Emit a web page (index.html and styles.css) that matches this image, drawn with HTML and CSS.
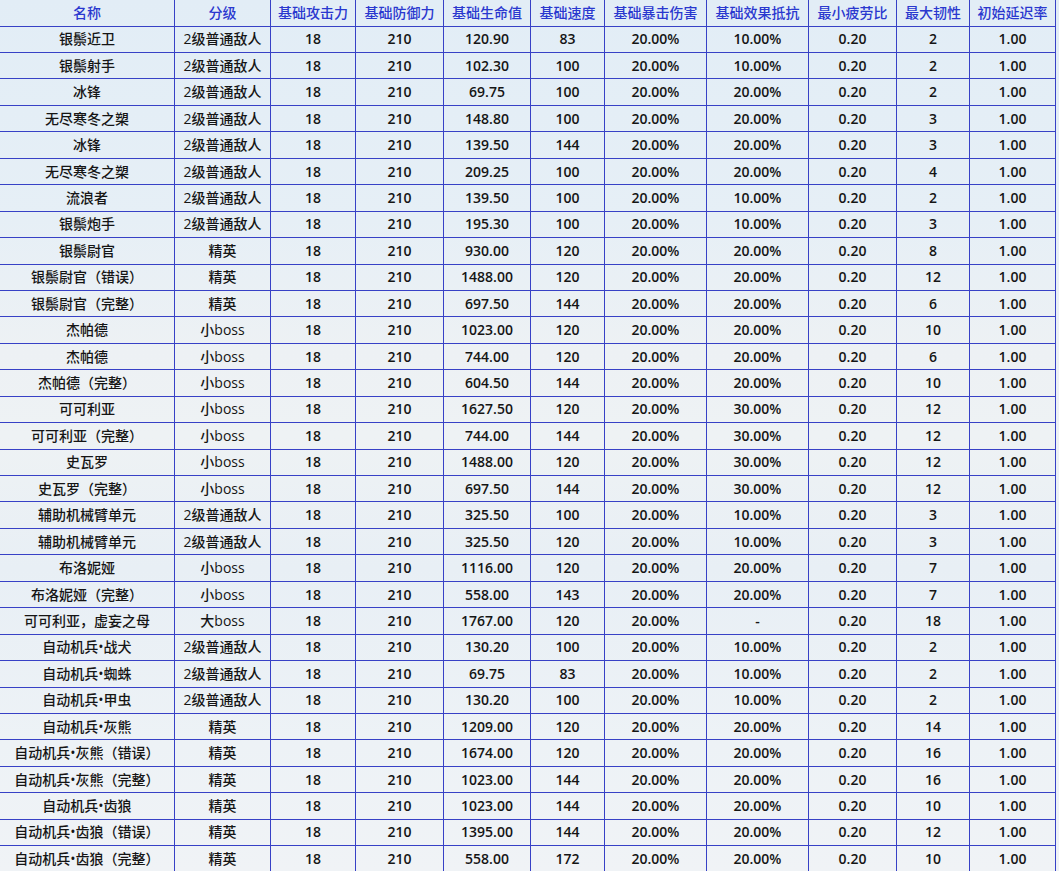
FILE: index.html
```html
<!DOCTYPE html>
<html lang="zh-CN">
<head>
<meta charset="utf-8">
<title>敌人基础数值</title>
<link rel="stylesheet" href="styles.css">
</head>
<body>
<table class="stats">
<colgroup>
<col class="c-name"><col class="c-rank"><col class="c-atk"><col class="c-def"><col class="c-hp"><col class="c-spd"><col class="c-crit"><col class="c-res"><col class="c-fat"><col class="c-tough"><col class="c-delay">
</colgroup>
<thead>
<tr><th>名称</th><th>分级</th><th>基础攻击力</th><th>基础防御力</th><th>基础生命值</th><th>基础速度</th><th>基础暴击伤害</th><th>基础效果抵抗</th><th>最小疲劳比</th><th>最大韧性</th><th>初始延迟率</th></tr>
</thead>
<tbody>
<tr><td>银鬃近卫</td><td>2级普通敌人</td><td>18</td><td>210</td><td>120.90</td><td>83</td><td>20.00%</td><td>10.00%</td><td>0.20</td><td>2</td><td>1.00</td></tr>
<tr><td>银鬃射手</td><td>2级普通敌人</td><td>18</td><td>210</td><td>102.30</td><td>100</td><td>20.00%</td><td>10.00%</td><td>0.20</td><td>2</td><td>1.00</td></tr>
<tr><td>冰锋</td><td>2级普通敌人</td><td>18</td><td>210</td><td>69.75</td><td>100</td><td>20.00%</td><td>20.00%</td><td>0.20</td><td>2</td><td>1.00</td></tr>
<tr><td>无尽寒冬之槊</td><td>2级普通敌人</td><td>18</td><td>210</td><td>148.80</td><td>100</td><td>20.00%</td><td>20.00%</td><td>0.20</td><td>3</td><td>1.00</td></tr>
<tr><td>冰锋</td><td>2级普通敌人</td><td>18</td><td>210</td><td>139.50</td><td>144</td><td>20.00%</td><td>20.00%</td><td>0.20</td><td>3</td><td>1.00</td></tr>
<tr><td>无尽寒冬之槊</td><td>2级普通敌人</td><td>18</td><td>210</td><td>209.25</td><td>100</td><td>20.00%</td><td>20.00%</td><td>0.20</td><td>4</td><td>1.00</td></tr>
<tr><td>流浪者</td><td>2级普通敌人</td><td>18</td><td>210</td><td>139.50</td><td>100</td><td>20.00%</td><td>10.00%</td><td>0.20</td><td>2</td><td>1.00</td></tr>
<tr><td>银鬃炮手</td><td>2级普通敌人</td><td>18</td><td>210</td><td>195.30</td><td>100</td><td>20.00%</td><td>10.00%</td><td>0.20</td><td>3</td><td>1.00</td></tr>
<tr><td>银鬃尉官</td><td>精英</td><td>18</td><td>210</td><td>930.00</td><td>120</td><td>20.00%</td><td>20.00%</td><td>0.20</td><td>8</td><td>1.00</td></tr>
<tr><td>银鬃尉官（错误）</td><td>精英</td><td>18</td><td>210</td><td>1488.00</td><td>120</td><td>20.00%</td><td>20.00%</td><td>0.20</td><td>12</td><td>1.00</td></tr>
<tr><td>银鬃尉官（完整）</td><td>精英</td><td>18</td><td>210</td><td>697.50</td><td>144</td><td>20.00%</td><td>20.00%</td><td>0.20</td><td>6</td><td>1.00</td></tr>
<tr><td>杰帕德</td><td>小boss</td><td>18</td><td>210</td><td>1023.00</td><td>120</td><td>20.00%</td><td>20.00%</td><td>0.20</td><td>10</td><td>1.00</td></tr>
<tr><td>杰帕德</td><td>小boss</td><td>18</td><td>210</td><td>744.00</td><td>120</td><td>20.00%</td><td>20.00%</td><td>0.20</td><td>6</td><td>1.00</td></tr>
<tr><td>杰帕德（完整）</td><td>小boss</td><td>18</td><td>210</td><td>604.50</td><td>144</td><td>20.00%</td><td>20.00%</td><td>0.20</td><td>10</td><td>1.00</td></tr>
<tr><td>可可利亚</td><td>小boss</td><td>18</td><td>210</td><td>1627.50</td><td>120</td><td>20.00%</td><td>30.00%</td><td>0.20</td><td>12</td><td>1.00</td></tr>
<tr><td>可可利亚（完整）</td><td>小boss</td><td>18</td><td>210</td><td>744.00</td><td>144</td><td>20.00%</td><td>30.00%</td><td>0.20</td><td>12</td><td>1.00</td></tr>
<tr><td>史瓦罗</td><td>小boss</td><td>18</td><td>210</td><td>1488.00</td><td>120</td><td>20.00%</td><td>30.00%</td><td>0.20</td><td>12</td><td>1.00</td></tr>
<tr><td>史瓦罗（完整）</td><td>小boss</td><td>18</td><td>210</td><td>697.50</td><td>144</td><td>20.00%</td><td>30.00%</td><td>0.20</td><td>12</td><td>1.00</td></tr>
<tr><td>辅助机械臂单元</td><td>2级普通敌人</td><td>18</td><td>210</td><td>325.50</td><td>100</td><td>20.00%</td><td>10.00%</td><td>0.20</td><td>3</td><td>1.00</td></tr>
<tr><td>辅助机械臂单元</td><td>2级普通敌人</td><td>18</td><td>210</td><td>325.50</td><td>120</td><td>20.00%</td><td>10.00%</td><td>0.20</td><td>3</td><td>1.00</td></tr>
<tr><td>布洛妮娅</td><td>小boss</td><td>18</td><td>210</td><td>1116.00</td><td>120</td><td>20.00%</td><td>20.00%</td><td>0.20</td><td>7</td><td>1.00</td></tr>
<tr><td>布洛妮娅（完整）</td><td>小boss</td><td>18</td><td>210</td><td>558.00</td><td>143</td><td>20.00%</td><td>20.00%</td><td>0.20</td><td>7</td><td>1.00</td></tr>
<tr><td>可可利亚，虚妄之母</td><td>大boss</td><td>18</td><td>210</td><td>1767.00</td><td>120</td><td>20.00%</td><td>-</td><td>0.20</td><td>18</td><td>1.00</td></tr>
<tr><td>自动机兵•战犬</td><td>2级普通敌人</td><td>18</td><td>210</td><td>130.20</td><td>100</td><td>20.00%</td><td>10.00%</td><td>0.20</td><td>2</td><td>1.00</td></tr>
<tr><td>自动机兵•蜘蛛</td><td>2级普通敌人</td><td>18</td><td>210</td><td>69.75</td><td>83</td><td>20.00%</td><td>10.00%</td><td>0.20</td><td>2</td><td>1.00</td></tr>
<tr><td>自动机兵•甲虫</td><td>2级普通敌人</td><td>18</td><td>210</td><td>130.20</td><td>100</td><td>20.00%</td><td>10.00%</td><td>0.20</td><td>2</td><td>1.00</td></tr>
<tr><td>自动机兵•灰熊</td><td>精英</td><td>18</td><td>210</td><td>1209.00</td><td>120</td><td>20.00%</td><td>20.00%</td><td>0.20</td><td>14</td><td>1.00</td></tr>
<tr><td>自动机兵•灰熊（错误）</td><td>精英</td><td>18</td><td>210</td><td>1674.00</td><td>120</td><td>20.00%</td><td>20.00%</td><td>0.20</td><td>16</td><td>1.00</td></tr>
<tr><td>自动机兵•灰熊（完整）</td><td>精英</td><td>18</td><td>210</td><td>1023.00</td><td>144</td><td>20.00%</td><td>20.00%</td><td>0.20</td><td>16</td><td>1.00</td></tr>
<tr><td>自动机兵•齿狼</td><td>精英</td><td>18</td><td>210</td><td>1023.00</td><td>144</td><td>20.00%</td><td>20.00%</td><td>0.20</td><td>10</td><td>1.00</td></tr>
<tr><td>自动机兵•齿狼（错误）</td><td>精英</td><td>18</td><td>210</td><td>1395.00</td><td>144</td><td>20.00%</td><td>20.00%</td><td>0.20</td><td>12</td><td>1.00</td></tr>
<tr><td>自动机兵•齿狼（完整）</td><td>精英</td><td>18</td><td>210</td><td>558.00</td><td>172</td><td>20.00%</td><td>20.00%</td><td>0.20</td><td>10</td><td>1.00</td></tr>
</tbody>
</table>
</body>
</html>
```
FILE: styles.css
```css
html, body {
  margin: 0;
  padding: 0;
}
body {
  width: 1059px;
  min-height: 871px;
  background: linear-gradient(180deg, #e2edf6 0%, #e6eff6 25%, #edf1f4 40%, #eef2f4 50%, #e8eff5 65%, #edf2f6 85%, #f0f3f6 100%);
  font-family: "Open Sans", "Noto Sans CJK SC", sans-serif;
  overflow: hidden;
}
.stats {
  width: 1056px;
  table-layout: fixed;
  border-collapse: separate;
  border-spacing: 0;
}
.c-name { width: 175px; }
.c-rank { width: 96px; }
.c-atk { width: 85px; }
.c-def { width: 88px; }
.c-hp { width: 87px; }
.c-spd { width: 74px; }
.c-crit { width: 102px; }
.c-res { width: 102px; }
.c-fat { width: 88px; }
.c-tough { width: 73px; }
.c-delay { width: 86px; }
.stats th,
.stats td {
  box-sizing: border-box;
  height: 26.45px;
  padding: 0;
  text-align: center;
  vertical-align: middle;
  white-space: nowrap;
  border-right: 1px solid #3741c6;
  border-bottom: 1px solid #3741c6;
  font-size: 14px;
  line-height: 18px;
}
.stats th {
  height: 26.6px;
  color: #2a38cf;
  font-weight: 500;
}
.stats td {
  color: #151515;
  font-weight: 500;
}
.stats td:nth-child(n+3) {
  font-weight: 600;
}
```
